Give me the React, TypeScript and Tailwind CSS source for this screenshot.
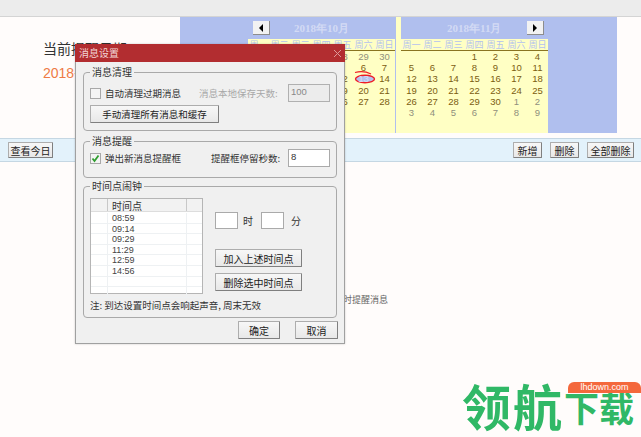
import React from "react";

const CJK = { fontFamily: '"Noto Sans CJK SC","Liberation Sans",sans-serif' };
const week = ["周一", "周二", "周三", "周四", "周五", "周六", "周日"];

type Cell = [string, boolean];
const oct: Cell[][] = [
  [["", false], ["", false], ["", false], ["", false], ["28", false], ["29", false], ["30", false]],
  [["", true], ["", true], ["", true], ["", true], ["", true], ["6", true], ["7", true]],
  [["", true], ["", true], ["", true], ["", true], ["12", true], ["13", true], ["14", true]],
  [["", true], ["", true], ["", true], ["", true], ["19", true], ["20", true], ["21", true]],
  [["", true], ["", true], ["", true], ["", true], ["26", true], ["27", true], ["28", true]],
  [["", true], ["", true], ["", true], ["", true], ["", true], ["", true], ["", true]],
];
const nov: Cell[][] = [
  [["", false], ["", false], ["", false], ["1", true], ["2", true], ["3", true], ["4", true]],
  [["5", true], ["6", true], ["7", true], ["8", true], ["9", true], ["10", true], ["11", true]],
  [["12", true], ["13", true], ["14", true], ["15", true], ["16", true], ["17", true], ["18", true]],
  [["19", true], ["20", true], ["21", true], ["22", true], ["23", true], ["24", true], ["25", true]],
  [["26", true], ["27", true], ["28", true], ["29", true], ["30", true], ["1", false], ["2", false]],
  [["3", false], ["4", false], ["5", false], ["6", false], ["7", false], ["8", false], ["9", false]],
];

function Month({ rows, circled }: { rows: Cell[][]; circled?: boolean }) {
  return (
    <div className="w-[147px] bg-[#ffffc4] h-[94px]">
      <div className="grid grid-cols-7 h-[12px] border-b border-[#8a7420] text-[#b4c2ee] text-[9px] leading-[11px] text-center" style={CJK}>
        {week.map((d) => (
          <span key={d} className="whitespace-nowrap">{d}</span>
        ))}
      </div>
      <div className="font-['Liberation_Sans',sans-serif] text-[9.5px]">
        {rows.map((r, i) => (
          <div key={i} className="grid grid-cols-7 h-[11.2px] leading-[11px] text-center">
            {r.map((c, j) => (
              <span key={j} className={c[1] ? "text-[#7b5d10]" : "text-[#8f8f7c]"}>
                {circled && i === 2 && j === 5 ? (
                  <span className="relative block h-full">
                    <svg className="absolute left-[-1px] top-[-3px]" width="26" height="16" viewBox="0 0 26 16">
                      <ellipse cx="13" cy="9" rx="9.5" ry="3.8" fill="#b4c2ee" stroke="#ee1c25" strokeWidth="1.4" />
                      <path d="M3 2.5 C9 1 15 2 19 4" fill="none" stroke="#ee1c25" strokeWidth="1.2" />
                    </svg>
                    <span className="relative text-[#d9e0f6]">{c[0]}</span>
                  </span>
                ) : (
                  c[0]
                )}
              </span>
            ))}
          </div>
        ))}
      </div>
    </div>
  );
}

function ArrowBtn({ dir }: { dir: "l" | "r" }) {
  return (
    <div className="w-[17px] h-[14px] bg-[#f2f2f2] border-r border-b border-[#8d8d8d] flex items-center justify-center">
      <div className={dir === "l" ? "w-0 h-0 border-y-[4px] border-y-transparent border-r-[4px] border-r-black" : "w-0 h-0 border-y-[4px] border-y-transparent border-l-[4px] border-l-black"} />
    </div>
  );
}

function Btn({ children, className }: { children: React.ReactNode; className: string }) {
  return (
    <div className={"flex items-center justify-center bg-linear-to-b from-[#f7f7f7] to-[#e8e8e8] border border-[#adadad] border-r-[#7f7f7f] border-b-[#7f7f7f] rounded-[1px] text-[#222] whitespace-nowrap " + className} style={CJK}>
      {children}
    </div>
  );
}

function Group({ title, className, children }: { title: string; className: string; children: React.ReactNode }) {
  return (
    <div className={"relative border border-[#a9a9a9] rounded-[4px] mx-[7px] " + className}>
      <span className="absolute left-[6px] top-[-8px] px-[2px] bg-[#f0f0f0] text-[10px] leading-[14px] text-[#333]" style={CJK}>{title}</span>
      {children}
    </div>
  );
}

function Check({ checked }: { checked?: boolean }) {
  return (
    <div className="w-[11px] h-[11px] border border-[#a8a8a8] bg-[#f4f4f4] flex items-center justify-center shrink-0">
      {checked && (
        <svg width="9" height="9" viewBox="0 0 9 9">
          <path d="M1.5 4.5 L3.5 7 L7.5 1.5" fill="none" stroke="#2f9e2f" strokeWidth="1.8" />
        </svg>
      )}
    </div>
  );
}

function Field({ value, className }: { value?: string; className: string }) {
  return (
    <div className={"border border-[#aaa] text-[9.5px] leading-[13px] pl-[2px] font-['Liberation_Sans',sans-serif] " + className}>{value}</div>
  );
}

export default function App() {
  return (
    <div className="relative w-[641px] h-[437px] overflow-hidden bg-[#fffcfb] flex flex-col" style={CJK}>
      <div className="h-[17px] bg-[#ececec] border-b border-[#d4d4d4] shrink-0" />

      <div className="flex h-[116px] shrink-0">
        <div className="w-[180px] pl-[43px] pt-[22px]">
          <div className="text-[14px] leading-[18px] text-[#333] whitespace-nowrap">当前提醒日期</div>
          <div className="text-[14px] leading-[18px] mt-[7px] text-[#ee7a45] font-['Liberation_Sans',sans-serif]">2018-10-13</div>
        </div>
        <div className="w-[437px] bg-[#b0bfee] relative flex justify-center">
          <div className="flex w-[301px] h-full">
            <div className="w-[148px] shrink-0 flex flex-col">
              <div className="h-[22px]" />
              <Month rows={oct} circled />
            </div>
            <div className="w-[5px] bg-[#ffffc4] shrink-0" />
            <div className="w-[148px] shrink-0 flex flex-col">
              <div className="h-[22px]" />
              <Month rows={nov} />
            </div>
          </div>
          <div className="absolute left-[73px] top-[4px]"><ArrowBtn dir="l" /></div>
          <div className="absolute left-[347px] top-[4px]"><ArrowBtn dir="r" /></div>
          <div className="absolute left-[114px] top-[5px] text-[11px] leading-[13px] font-bold text-[#d3daf4] font-['Liberation_Serif',serif] whitespace-nowrap">2018年10月</div>
          <div className="absolute left-[267px] top-[5px] text-[11px] leading-[13px] font-bold text-[#d3daf4] font-['Liberation_Serif',serif] whitespace-nowrap">2018年11月</div>
        </div>
      </div>

      <div className="mt-[5px] h-[24px] shrink-0 bg-[#e3f2fb] border-y border-[#c5d7e3] flex items-center pl-[8px] pr-[7px]">
        <Btn className="w-[45px] h-[16px] text-[10px]">查看今日</Btn>
        <div className="ml-auto flex gap-[8px]">
          <Btn className="w-[29px] h-[16px] text-[10px]">新增</Btn>
          <Btn className="w-[29px] h-[16px] text-[10px]">删除</Btn>
          <Btn className="w-[47px] h-[16px] text-[10px]">全部删除</Btn>
        </div>
      </div>

      <div className="h-[145px] shrink-0 flex items-end justify-end pr-[253px]">
        <span className="text-[9px] leading-[14px] text-[#666] whitespace-nowrap">今日没有定时提醒消息</span>
      </div>

      <div className="flex-1 flex justify-end pt-[68px]">
        <div className="relative w-[179px] h-[56px] flex items-end whitespace-nowrap font-bold text-[#30b866]">
          <span className="text-[49px] leading-[52px] tracking-[2px]">领航</span>
          <span className="text-[35px] leading-[48px]">下载</span>
          <div className="absolute left-[106px] top-[7px] w-[73px] h-[11px] bg-[#f4683c] rounded-t-[6px] text-white text-[9px] leading-[11px] text-center font-normal font-['Liberation_Sans',sans-serif]">lhdown.com</div>
        </div>
      </div>

      {/* dialog */}
      <div className="absolute left-[75px] top-[44px] w-[270px] h-[300px] bg-[#f0f0f0] border border-[#a0a0a0] shadow-[0_0_2px_rgba(0,0,0,0.2)] flex flex-col">
        <div className="h-[18px] shrink-0 bg-[#b22d30] flex items-center justify-between pl-[4px] pr-[3px] -mx-px -mt-px">
          <span className="text-[10px] text-[#f3d5d5] leading-[18px]">消息设置</span>
          <svg width="9" height="9" viewBox="0 0 9 9"><path d="M1 1 L8 8 M8 1 L1 8" stroke="#d99" strokeWidth="1" /></svg>
        </div>

        <Group title="消息清理" className="mt-[10px] h-[59px] px-[6px] pt-[11px]">
          <div className="flex items-center h-[18px] text-[9.5px] text-[#333] whitespace-nowrap">
            <Check />
            <span className="ml-[4px]">自动清理过期消息</span>
            <span className="ml-[18px] text-[#a8a8a8]">消息本地保存天数:</span>
            <Field value="100" className="ml-auto w-[42px] h-[18px] bg-[#ececec] text-[#888] border-[#b0b0b0]" />
          </div>
          <Btn className="mt-[3px] w-[129px] h-[18px] text-[9.5px]">手动清理所有消息和缓存</Btn>
        </Group>

        <Group title="消息提醒" className="mt-[10px] h-[37px] px-[6px] pt-[7px]">
          <div className="flex items-center h-[18px] text-[9.5px] text-[#333] whitespace-nowrap">
            <Check checked />
            <span className="ml-[4px]">弹出新消息提醒框</span>
            <span className="ml-[30px]">提醒框停留秒数:</span>
            <Field value="8" className="ml-auto w-[42px] h-[18px] bg-white text-[#333]" />
          </div>
        </Group>

        <Group title="时间点闹钟" className="mt-[8px] h-[132px] px-[6px] pt-[11px]">
          <div className="flex">
            <div className="w-[113px] h-[96px] bg-white border border-[#b5b5b5] shrink-0 text-[9px] font-['Liberation_Sans',sans-serif] text-[#444]">
              <div className="flex h-[13px] bg-[#f2f2f2] border-b border-[#ddd] text-[10px] leading-[13px] text-[#333]" style={CJK}>
                <span className="w-[17px] border-r border-[#c8c8c8]" />
                <span className="w-[79px] border-r border-[#c8c8c8] pl-[4px]">时间点</span>
                <span className="flex-1" />
              </div>
              <div className="pt-[1px]">
                {["08:59", "09:14", "09:29", "11:29", "12:59", "14:56", "", ""].map((t, i) => (
                  <div key={i} className="flex h-[10.6px] leading-[10px] border-b border-[#eef1f3]">
                    <span className="w-[17px] border-r border-[#eef1f3]" />
                    <span className="w-[79px] border-r border-[#eef1f3] pl-[4px]">{t}</span>
                  </div>
                ))}
              </div>
            </div>
            <div className="ml-[12px] flex flex-col">
              <div className="flex items-center mt-[14px] text-[10px] text-[#333]">
                <Field className="w-[23px] h-[17px] bg-white" />
                <span className="ml-[5px]">时</span>
                <Field className="ml-[8px] w-[23px] h-[17px] bg-white" />
                <span className="ml-[7px]">分</span>
              </div>
              <Btn className="mt-[20px] w-[87px] h-[18px] text-[10px]">加入上述时间点</Btn>
              <Btn className="mt-[6px] w-[87px] h-[18px] text-[10px]">删除选中时间点</Btn>
            </div>
          </div>
          <div className="mt-[4px] text-[9.5px] leading-[14px] text-[#333] whitespace-nowrap">注: 到达设置时间点会响起声音, 周末无效</div>
        </Group>

        <div className="flex justify-end gap-[15px] mt-[3px] pr-[6px]">
          <Btn className="w-[42px] h-[18px] text-[10px]">确定</Btn>
          <Btn className="w-[43px] h-[18px] text-[10px]">取消</Btn>
        </div>
      </div>
    </div>
  );
}
